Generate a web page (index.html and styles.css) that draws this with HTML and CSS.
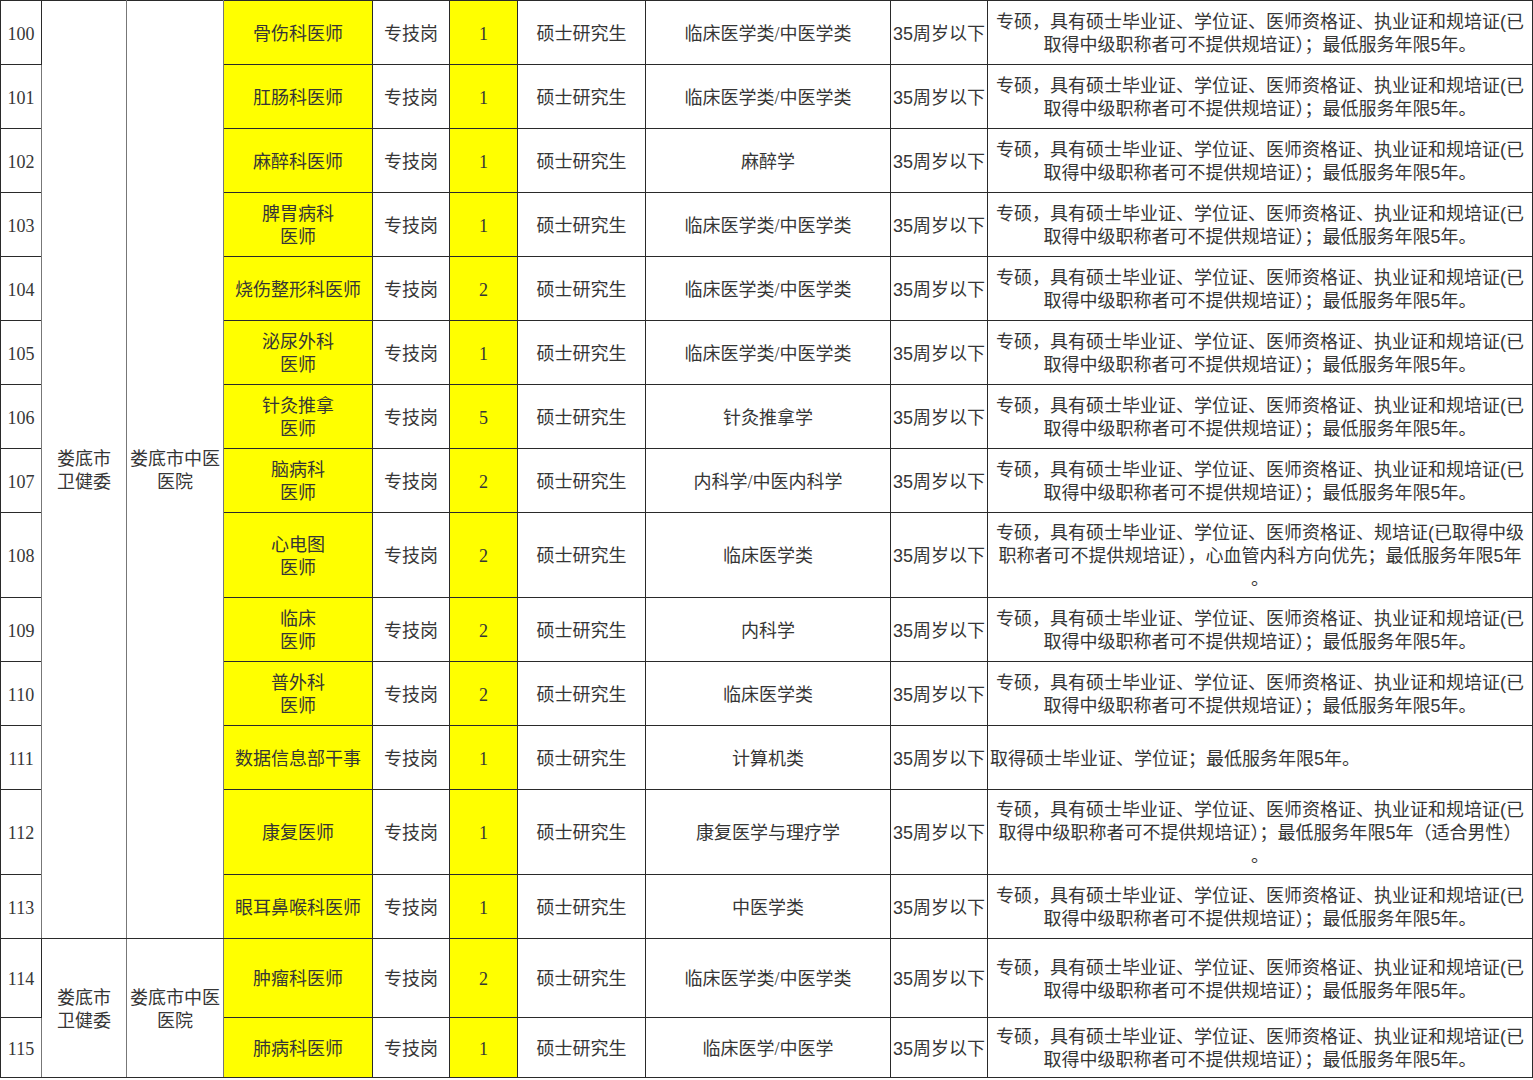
FILE: index.html
```html
<!DOCTYPE html>
<html lang="zh">
<head>
<meta charset="utf-8">
<title>岗位表</title>
<link rel="stylesheet" href="styles.css">
</head>
<body>
<table class="jobs">
<colgroup>
<col class="c-no"><col class="c-dept"><col class="c-unit"><col class="c-pos"><col class="c-type"><col class="c-num"><col class="c-edu"><col class="c-major"><col class="c-age"><col class="c-req">
</colgroup>
<tbody>
<tr class="r64 first">
<td class="no">100</td>
<td class="dept" rowspan="14">娄底市<br>卫健委</td>
<td class="unit" rowspan="14">娄底市中医<br>医院</td>
<td class="pos">骨伤科医师</td><td>专技岗</td><td class="num">1</td><td>硕士研究生</td><td>临床医学类/中医学类</td><td class="age">35周岁以下</td>
<td class="req">专硕，具有硕士毕业证、学位证、医师资格证、执业证和规培证(已<br>取得中级职称者可不提供规培证）；最低服务年限5年。</td>
</tr>
<tr class="r64"><td class="no">101</td><td class="pos">肛肠科医师</td><td>专技岗</td><td class="num">1</td><td>硕士研究生</td><td>临床医学类/中医学类</td><td class="age">35周岁以下</td><td class="req">专硕，具有硕士毕业证、学位证、医师资格证、执业证和规培证(已<br>取得中级职称者可不提供规培证）；最低服务年限5年。</td></tr>
<tr class="r64"><td class="no">102</td><td class="pos">麻醉科医师</td><td>专技岗</td><td class="num">1</td><td>硕士研究生</td><td>麻醉学</td><td class="age">35周岁以下</td><td class="req">专硕，具有硕士毕业证、学位证、医师资格证、执业证和规培证(已<br>取得中级职称者可不提供规培证）；最低服务年限5年。</td></tr>
<tr class="r64"><td class="no">103</td><td class="pos">脾胃病科<br>医师</td><td>专技岗</td><td class="num">1</td><td>硕士研究生</td><td>临床医学类/中医学类</td><td class="age">35周岁以下</td><td class="req">专硕，具有硕士毕业证、学位证、医师资格证、执业证和规培证(已<br>取得中级职称者可不提供规培证）；最低服务年限5年。</td></tr>
<tr class="r64"><td class="no">104</td><td class="pos">烧伤整形科医师</td><td>专技岗</td><td class="num">2</td><td>硕士研究生</td><td>临床医学类/中医学类</td><td class="age">35周岁以下</td><td class="req">专硕，具有硕士毕业证、学位证、医师资格证、执业证和规培证(已<br>取得中级职称者可不提供规培证）；最低服务年限5年。</td></tr>
<tr class="r64"><td class="no">105</td><td class="pos">泌尿外科<br>医师</td><td>专技岗</td><td class="num">1</td><td>硕士研究生</td><td>临床医学类/中医学类</td><td class="age">35周岁以下</td><td class="req">专硕，具有硕士毕业证、学位证、医师资格证、执业证和规培证(已<br>取得中级职称者可不提供规培证）；最低服务年限5年。</td></tr>
<tr class="r64"><td class="no">106</td><td class="pos">针灸推拿<br>医师</td><td>专技岗</td><td class="num">5</td><td>硕士研究生</td><td>针灸推拿学</td><td class="age">35周岁以下</td><td class="req">专硕，具有硕士毕业证、学位证、医师资格证、执业证和规培证(已<br>取得中级职称者可不提供规培证）；最低服务年限5年。</td></tr>
<tr class="r64"><td class="no">107</td><td class="pos">脑病科<br>医师</td><td>专技岗</td><td class="num">2</td><td>硕士研究生</td><td>内科学/中医内科学</td><td class="age">35周岁以下</td><td class="req">专硕，具有硕士毕业证、学位证、医师资格证、执业证和规培证(已<br>取得中级职称者可不提供规培证）；最低服务年限5年。</td></tr>
<tr class="r85"><td class="no">108</td><td class="pos">心电图<br>医师</td><td>专技岗</td><td class="num">2</td><td>硕士研究生</td><td>临床医学类</td><td class="age">35周岁以下</td><td class="req">专硕，具有硕士毕业证、学位证、医师资格证、规培证(已取得中级<br>职称者可不提供规培证），心血管内科方向优先；最低服务年限5年<br>。</td></tr>
<tr class="r64"><td class="no">109</td><td class="pos">临床<br>医师</td><td>专技岗</td><td class="num">2</td><td>硕士研究生</td><td>内科学</td><td class="age">35周岁以下</td><td class="req">专硕，具有硕士毕业证、学位证、医师资格证、执业证和规培证(已<br>取得中级职称者可不提供规培证）；最低服务年限5年。</td></tr>
<tr class="r64"><td class="no">110</td><td class="pos">普外科<br>医师</td><td>专技岗</td><td class="num">2</td><td>硕士研究生</td><td>临床医学类</td><td class="age">35周岁以下</td><td class="req">专硕，具有硕士毕业证、学位证、医师资格证、执业证和规培证(已<br>取得中级职称者可不提供规培证）；最低服务年限5年。</td></tr>
<tr class="r64"><td class="no">111</td><td class="pos">数据信息部干事</td><td>专技岗</td><td class="num">1</td><td>硕士研究生</td><td>计算机类</td><td class="age">35周岁以下</td><td class="req left">取得硕士毕业证、学位证；最低服务年限5年。</td></tr>
<tr class="r85"><td class="no">112</td><td class="pos">康复医师</td><td>专技岗</td><td class="num">1</td><td>硕士研究生</td><td>康复医学与理疗学</td><td class="age">35周岁以下</td><td class="req">专硕，具有硕士毕业证、学位证、医师资格证、执业证和规培证(已<br>取得中级职称者可不提供规培证）；最低服务年限5年（适合男性）<br>。</td></tr>
<tr class="r64"><td class="no">113</td><td class="pos">眼耳鼻喉科医师</td><td>专技岗</td><td class="num">1</td><td>硕士研究生</td><td>中医学类</td><td class="age">35周岁以下</td><td class="req">专硕，具有硕士毕业证、学位证、医师资格证、执业证和规培证(已<br>取得中级职称者可不提供规培证）；最低服务年限5年。</td></tr>
<tr class="r79">
<td class="no">114</td>
<td class="dept" rowspan="2">娄底市<br>卫健委</td>
<td class="unit" rowspan="2">娄底市中医<br>医院</td>
<td class="pos">肿瘤科医师</td><td>专技岗</td><td class="num">2</td><td>硕士研究生</td><td>临床医学类/中医学类</td><td class="age">35周岁以下</td><td class="req">专硕，具有硕士毕业证、学位证、医师资格证、执业证和规培证(已<br>取得中级职称者可不提供规培证）；最低服务年限5年。</td></tr>
<tr class="r60"><td class="no">115</td><td class="pos">肺病科医师</td><td>专技岗</td><td class="num">1</td><td>硕士研究生</td><td>临床医学/中医学</td><td class="age">35周岁以下</td><td class="req">专硕，具有硕士毕业证、学位证、医师资格证、执业证和规培证(已<br>取得中级职称者可不提供规培证）；最低服务年限5年。</td></tr>
</tbody>
</table>
</body>
</html>
```
FILE: styles.css
```css
html, body {
  margin: 0;
  padding: 0;
  background: #ffffff;
}
body {
  font-family: "Liberation Serif", "Noto Sans CJK SC", serif;
  font-size: 18px;
  color: #363636;
}
.jobs {
  border-collapse: collapse;
  table-layout: fixed;
  width: 1532px;
}
.c-no { width: 41px; }
.c-dept { width: 85px; }
.c-unit { width: 97px; }
.c-pos { width: 149px; }
.c-type { width: 77px; }
.c-num { width: 68px; }
.c-edu { width: 128px; }
.c-major { width: 245px; }
.c-age { width: 97px; }
.c-req { width: 545px; }

.jobs td {
  border: 1px solid #2a2a2a;
  padding: 3px 0 0;
  text-align: center;
  vertical-align: middle;
  line-height: 23px;
  white-space: nowrap;
  overflow: hidden;
}
.r64 { height: 64px; }
.r85 { height: 85px; }
.r79 { height: 79px; }
.r60 { height: 60px; }

.jobs .dept, .jobs .unit {
  border-left-color: #777777;
  border-right-color: #777777;
}
.jobs .pos, .jobs .num {
  background: #ffff00;
}
.jobs .no {
  font-family: "Liberation Serif", serif;
}
.jobs .age {
  font-family: "Liberation Sans", "Noto Sans CJK SC", sans-serif;
}
.jobs .req {
  font-family: "Liberation Sans", "Noto Sans CJK SC", sans-serif;
  padding: 3px 4px 0;
}
.jobs .req.left {
  text-align: left;
  padding-left: 2px;
}
```
